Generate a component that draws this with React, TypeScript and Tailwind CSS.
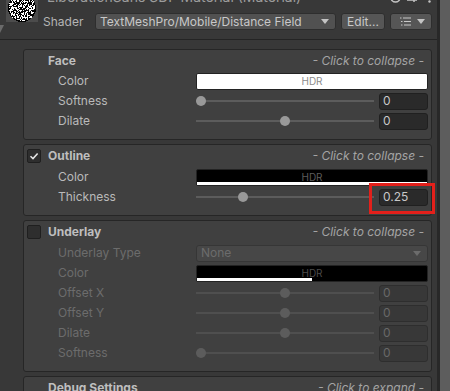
import { useMemo } from "react";

/* ── Small building blocks ─────────────────────────────── */

function NoiseIcon() {
  // deterministic speckle inside a black disc
  const dots = useMemo(() => {
    let s = 1337;
    const rnd = () => {
      s = (s * 1103515245 + 12345) % 2147483648;
      return s / 2147483648;
    };
    const out: { x: number; y: number }[] = [];
    for (let y = 4; y < 32; y++) {
      for (let x = 1; x < 31; x++) {
        const dx = x + 0.5 - 16;
        const dy = y + 0.5 - 18;
        if (dx * dx + dy * dy < 13.5 * 13.5 && rnd() < 0.45) out.push({ x, y });
      }
    }
    return out;
  }, []);
  return (
    <div className="h-[32px] w-[32px] shrink-0 bg-[#4c4c4c]">
      <svg width="32" height="32" viewBox="0 0 32 32" shapeRendering="crispEdges">
        <circle cx="16" cy="18" r="14" fill="#000" />
        {dots.map((d, i) => (
          <rect key={i} x={d.x} y={d.y} width="1" height="1" fill="#fff" />
        ))}
      </svg>
    </div>
  );
}

function Caret({ color = "#c4c4c4" }: { color?: string }) {
  return (
    <svg width="8" height="5" viewBox="0 0 8 5">
      <path d="M0 0 H8 L4 5 Z" fill={color} />
    </svg>
  );
}

function Checkbox({ checked }: { checked: boolean }) {
  return (
    <div className="flex h-[14px] w-[14px] items-center justify-center rounded-[2px] border border-[#1f1f1f] bg-[#2e2e2e]">
      {checked && (
        <svg width="10" height="10" viewBox="0 0 10 10">
          <path d="M1.5 5.2 L4 7.6 L8.6 2.4" stroke="#e6e6e6" strokeWidth="1.5" fill="none" />
        </svg>
      )}
    </div>
  );
}

function NumberField({ value, disabled }: { value: string; disabled?: boolean }) {
  return (
    <div
      className={`flex h-[17px] w-[49px] items-center rounded-[3px] border pl-[3px] text-[12px] ${
        disabled
          ? "border-[#2e2e2e] bg-[#383838] text-[#686868]"
          : "border-[#202020] bg-[#2a2a2a] text-[#c8c8c8]"
      }`}
    >
      {value}
    </div>
  );
}

function Slider({ pct, value, disabled }: { pct: number; value: string; disabled?: boolean }) {
  return (
    <div className="flex w-[232px] items-center gap-[5px]">
      <div className="relative flex h-[17px] w-[178px] items-center">
        <div className={`h-[2px] w-full ${disabled ? "bg-[#4f4f4f]" : "bg-[#5c5c5c]"}`} />
        <div
          className={`absolute top-[3px] h-[10px] w-[10px] rounded-full ${
            disabled ? "bg-[#5c5c5c]" : "bg-[#999999]"
          }`}
          style={{ left: `${pct * 168}px` }}
        />
      </div>
      <NumberField value={value} disabled={disabled} />
    </div>
  );
}

function ColorField({ white, alpha, disabled }: { white?: boolean; alpha: number; disabled?: boolean }) {
  return (
    <div
      className={`relative flex h-[17px] w-[232px] items-center justify-center rounded-[2px] border border-[#232323] ${
        white ? "bg-white" : "bg-black"
      }`}
    >
      <span
        className={`text-[10px] ${white ? "text-[#8c8c8c]" : disabled ? "text-[#4a4a4a]" : "text-[#5c5c5c]"}`}
      >
        HDR
      </span>
      {!white && (
        <div className="absolute bottom-0 left-0 h-[3px] bg-white" style={{ width: `${alpha * 100}%` }} />
      )}
    </div>
  );
}

function Row({ label, disabled, children }: { label: string; disabled?: boolean; children: React.ReactNode }) {
  return (
    <div className="flex h-[20px] items-center pr-[3px] pl-[34px]">
      <div className={`flex-1 text-[12px] ${disabled ? "text-[#6c6c6c]" : "text-[#bababa]"}`}>{label}</div>
      {children}
    </div>
  );
}

function Header({
  title,
  hint,
  check,
}: {
  title: string;
  hint: string;
  check?: boolean;
}) {
  const hasBox = check !== undefined;
  return (
    <div
      className={`flex items-center pr-[7px] ${hasBox ? "h-[22px] pl-[3px]" : "h-[21px] pl-[24px]"}`}
    >
      {hasBox && (
        <div className="mr-[7px]">
          <Checkbox checked={check} />
        </div>
      )}
      <div className="flex-1 text-[12px] font-bold text-[#bebebe]">{title}</div>
      <div className="text-[12px] italic text-[#a4a4a4]">{hint}</div>
    </div>
  );
}

function Panel({ children, className = "" }: { children: React.ReactNode; className?: string }) {
  return (
    <div className={`relative rounded-[3px] border border-[#262626] bg-[#404040] pb-[8px] ${className}`}>
      {children}
    </div>
  );
}

/* ── Page ──────────────────────────────────────────────── */

export default function App() {
  return (
    <div className="flex h-[391px] w-[450px] overflow-hidden bg-[#383838] font-['Inter',sans-serif]">
      <div className="relative flex w-[437px] flex-col">
        {/* material header */}
        <div className="flex h-[40px] shrink-0 border-b border-[#242424] pl-[6px]">
          <div className="-mt-[10px]">
            <NoiseIcon />
          </div>
          <div className="-mt-[13px] ml-[5px] flex flex-1 flex-col">
            <div className="flex h-[18px] items-center pl-[4px]">
              <span className="flex-1 text-[14px] text-[#9c9c9c]">LiberationSans SDF Material (Material)</span>
              <div className="mt-[2px] flex items-center text-[#c4c4c4]">
                <svg width="11" height="11" viewBox="0 0 11 11">
                  <circle cx="5.5" cy="5.5" r="4.5" stroke="#c4c4c4" strokeWidth="1.6" fill="none" />
                </svg>
                <svg className="ml-[5px]" width="12" height="11" viewBox="0 0 12 11">
                  <path d="M1 3 H11 M1 8 H11 M4 1 V5 M8 6 V10" stroke="#c4c4c4" strokeWidth="1.5" />
                </svg>
                <svg className="mr-[6px] ml-[10px]" width="3" height="11" viewBox="0 0 3 11">
                  <circle cx="1.5" cy="1.5" r="1.2" fill="#c4c4c4" />
                  <circle cx="1.5" cy="5.5" r="1.2" fill="#c4c4c4" />
                  <circle cx="1.5" cy="9.5" r="1.2" fill="#c4c4c4" />
                </svg>
              </div>
            </div>
            <div className="mt-[8px] flex h-[17px] items-center">
              <div className="w-[52px] text-[12px] text-[#b4b4b4]">Shader</div>
              <div className="flex h-[17px] w-[241px] items-center justify-between rounded-[3px] border border-[#2e2e2e] bg-[#515151] pr-[6px] pl-[4px] text-[12px] text-[#c8c8c8]">
                <span>TextMeshPro/Mobile/Distance Field</span>
                <Caret />
              </div>
              <div className="ml-[5px] flex h-[17px] w-[44px] items-center justify-center rounded-[3px] border border-[#2e2e2e] bg-[#565656] text-[12px] text-[#c8c8c8]">
                Edit...
              </div>
              <div className="ml-[5px] flex h-[17px] w-[42px] items-center justify-between rounded-[3px] border border-[#2e2e2e] bg-[#565656] pr-[6px] pl-[9px]">
                <svg width="11" height="9" viewBox="0 0 11 9">
                  <path d="M0 1 H1.5 M3 1 H11 M1 4.5 H2.5 M4 4.5 H11 M1 8 H2.5 M4 8 H11" stroke="#c8c8c8" strokeWidth="1.2" />
                </svg>
                <Caret />
              </div>
            </div>
          </div>
        </div>

        {/* foldout arrow peeking at the edge */}
        <svg className="absolute top-[25px] left-0" width="4" height="8" viewBox="0 0 4 8">
          <path d="M-4 0 H4 L0 8 Z" fill="#6a6a6a" />
        </svg>

        {/* property panels */}
        <div className="flex flex-col gap-[4px] pt-[9px] pr-[5px] pl-[23px]">
          <Panel>
            <Header title="Face" hint="- Click to collapse -" />
            <Row label="Color">
              <ColorField white alpha={1} />
            </Row>
            <Row label="Softness">
              <Slider pct={0} value="0" />
            </Row>
            <Row label="Dilate">
              <Slider pct={0.5} value="0" />
            </Row>
          </Panel>

          <Panel>
            <Header title="Outline" hint="- Click to collapse -" check={true} />
            <Row label="Color">
              <ColorField alpha={1} />
            </Row>
            <Row label="Thickness">
              <Slider pct={0.25} value="0.25" />
            </Row>
            {/* highlight box */}
            <div className="absolute top-[38px] left-[345px] h-[31px] w-[66px] border-[3px] border-[#e3201b]" />
          </Panel>

          <Panel>
            <Header title="Underlay" hint="- Click to collapse -" check={false} />
            <Row label="Underlay Type" disabled>
              <div className="flex h-[17px] w-[232px] items-center justify-between rounded-[3px] border border-[#363636] bg-[#474747] pr-[6px] pl-[4px] text-[12px] text-[#6c6c6c]">
                <span>None</span>
                <Caret color="#6c6c6c" />
              </div>
            </Row>
            <Row label="Color" disabled>
              <ColorField alpha={0.5} disabled />
            </Row>
            <Row label="Offset X" disabled>
              <Slider pct={0.5} value="0" disabled />
            </Row>
            <Row label="Offset Y" disabled>
              <Slider pct={0.5} value="0" disabled />
            </Row>
            <Row label="Dilate" disabled>
              <Slider pct={0.5} value="0" disabled />
            </Row>
            <Row label="Softness" disabled>
              <Slider pct={0} value="0" disabled />
            </Row>
          </Panel>

          <Panel>
            <Header title="Debug Settings" hint="- Click to expand -" />
          </Panel>
        </div>
      </div>

      {/* scrollbar */}
      <div className="w-[3px] bg-[#282828]" />
      <div className="w-[10px] bg-[#5d5d5d]" />
    </div>
  );
}
